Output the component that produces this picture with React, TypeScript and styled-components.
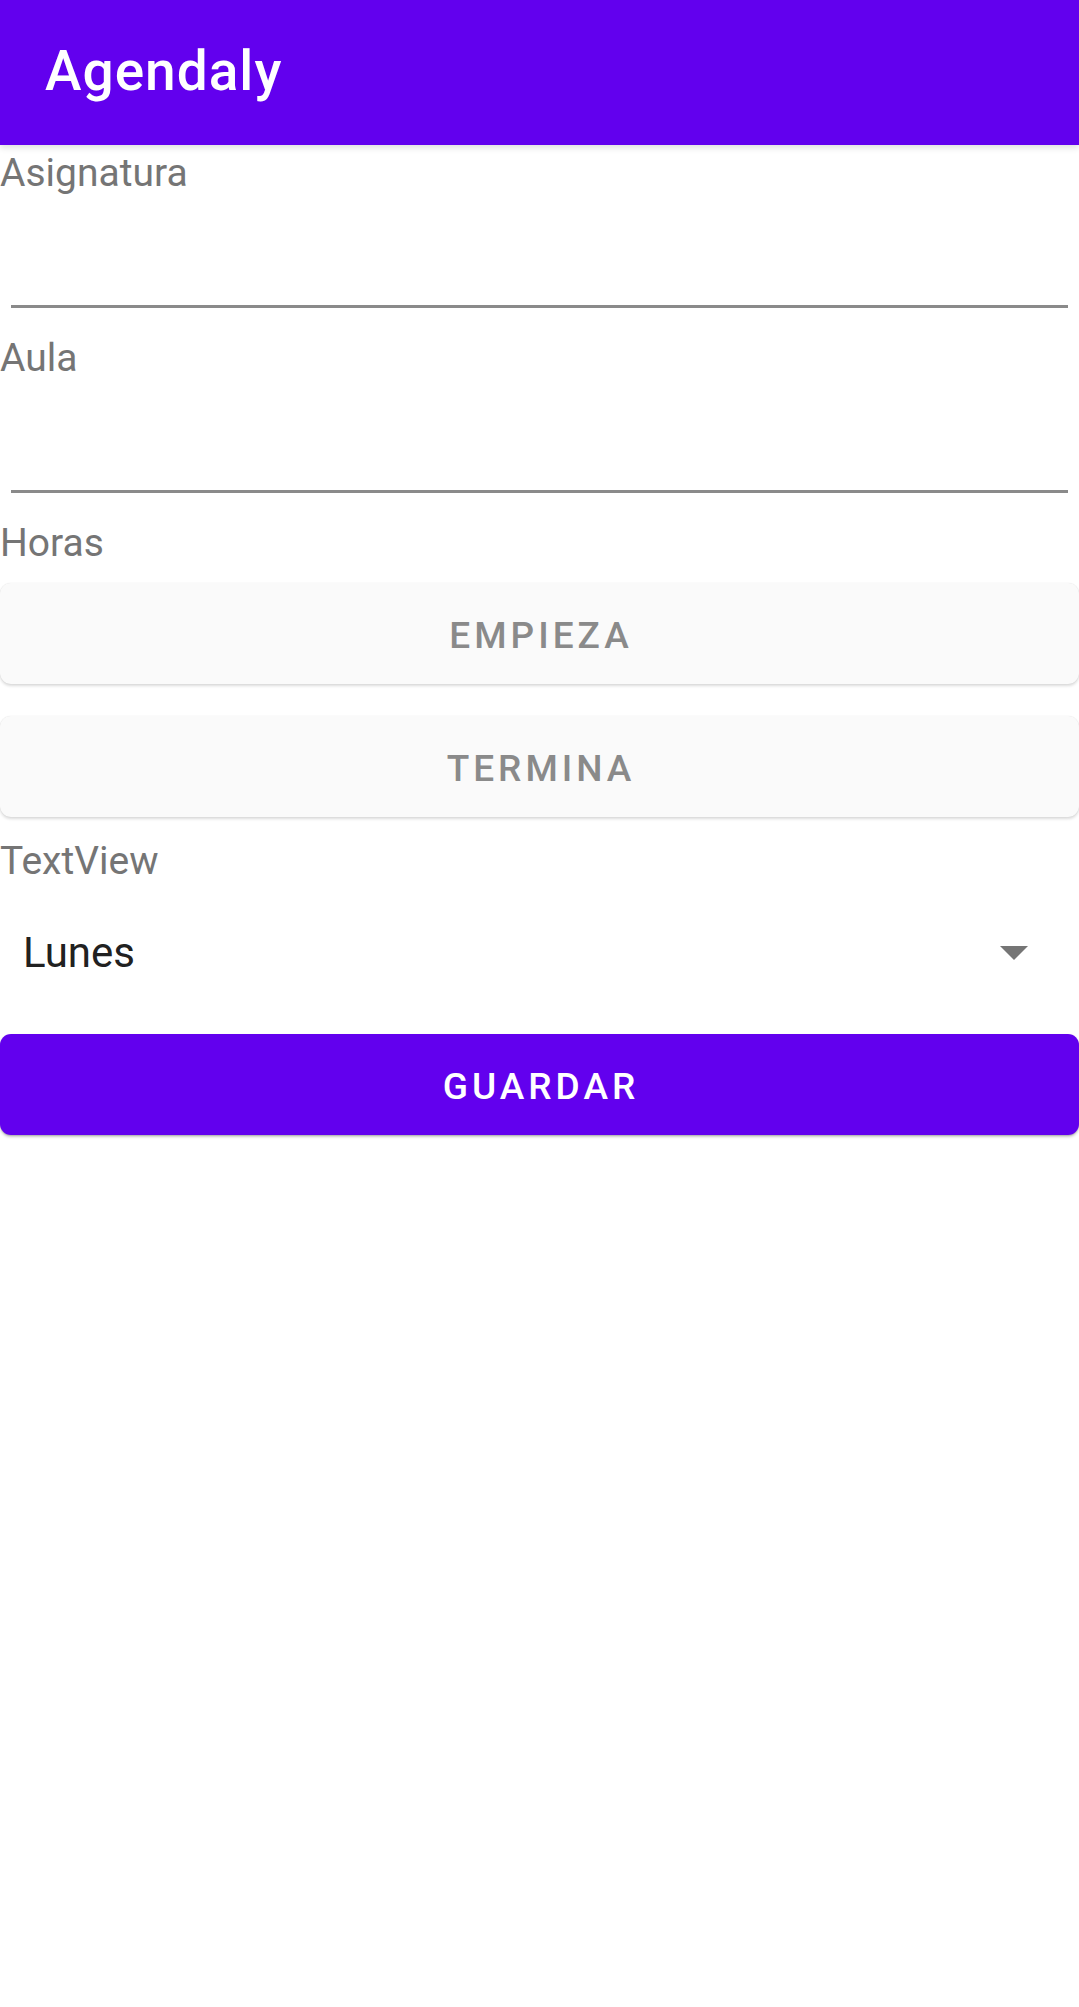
import React from "react"
import styled, { createGlobalStyle } from "styled-components"

const GlobalStyle = createGlobalStyle`
  html, body {
    margin: 0;
    padding: 0;
    background: #ffffff;
    font-family: Roboto, "Noto Sans", "Liberation Sans", sans-serif;
  }
  * {
    box-sizing: border-box;
  }
`

const Screen = styled.div`
  display: flex;
  flex-direction: column;
  width: 1079px;
  min-height: 2007px;
  background: #ffffff;
`

const Toolbar = styled.header`
  display: flex;
  align-items: center;
  height: 145px;
  padding: 0 0 3px 45px;
  background: #6200ee;
  box-shadow: 0 3px 6px rgba(0, 0, 0, 0.12);
  position: relative;
  z-index: 1;
`

const Title = styled.h1`
  margin: 0;
  font-size: 55px;
  font-weight: 500;
  color: #ffffff;
  letter-spacing: 1px;
`

const Form = styled.form`
  display: flex;
  flex-direction: column;
`

const Label = styled.label`
  display: block;
  height: 52px;
  padding-top: 5px;
  line-height: 47px;
  font-size: 39px;
  color: #757575;
  white-space: nowrap;
`

const Input = styled.input`
  display: block;
  width: calc(100% - 22px);
  height: 111px;
  margin: 0 11px 22px;
  padding: 0 8px;
  border: none;
  border-bottom: 3px solid #8a8a8a;
  background: transparent;
  font-family: inherit;
  font-size: 42px;
  color: #212121;
  outline: none;
`

const Button = styled.button<{ $primary?: boolean }>`
  display: flex;
  align-items: center;
  justify-content: center;
  width: 100%;
  height: 101px;
  margin: 16px 0;
  padding: 3px 0 0 3px;
  border: none;
  border-radius: 11px;
  background: ${(p) => (p.$primary ? "#6200ee" : "#fafafa")};
  color: ${(p) => (p.$primary ? "#ffffff" : "#8a8a8a")};
  box-shadow: ${(p) =>
    p.$primary
      ? "0 2px 3px rgba(0, 0, 0, 0.22), 0 1px 1px rgba(0, 0, 0, 0.12)"
      : "0 2px 3px rgba(0, 0, 0, 0.14), 0 0 1px rgba(0, 0, 0, 0.12)"};
  font-family: inherit;
  font-size: 37px;
  font-weight: 500;
  letter-spacing: 4px;
  text-transform: uppercase;
  cursor: pointer;
`

const Spinner = styled.div`
  display: flex;
  align-items: center;
  justify-content: space-between;
  height: 133px;
  padding: 2px 51px 0 23px;
`

const SpinnerValue = styled.span`
  font-size: 42px;
  color: #212121;
`

const Arrow = () => (
  <svg width="28" height="14" viewBox="0 0 28 14" aria-hidden="true">
    <path d="M0 0 L28 0 L14 14 Z" fill="#757575" />
  </svg>
)

export default function App() {
  return (
    <>
      <GlobalStyle />
      <Screen>
        <Toolbar>
          <Title>Agendaly</Title>
        </Toolbar>
        <Form onSubmit={(e) => e.preventDefault()}>
          <Label htmlFor="asignatura">Asignatura</Label>
          <Input id="asignatura" />
          <Label htmlFor="aula">Aula</Label>
          <Input id="aula" />
          <Label>Horas</Label>
          <Button type="button">Empieza</Button>
          <Button type="button">Termina</Button>
          <Label>TextView</Label>
          <Spinner>
            <SpinnerValue>Lunes</SpinnerValue>
            <Arrow />
          </Spinner>
          <Button type="submit" $primary>
            Guardar
          </Button>
        </Form>
      </Screen>
    </>
  )
}
